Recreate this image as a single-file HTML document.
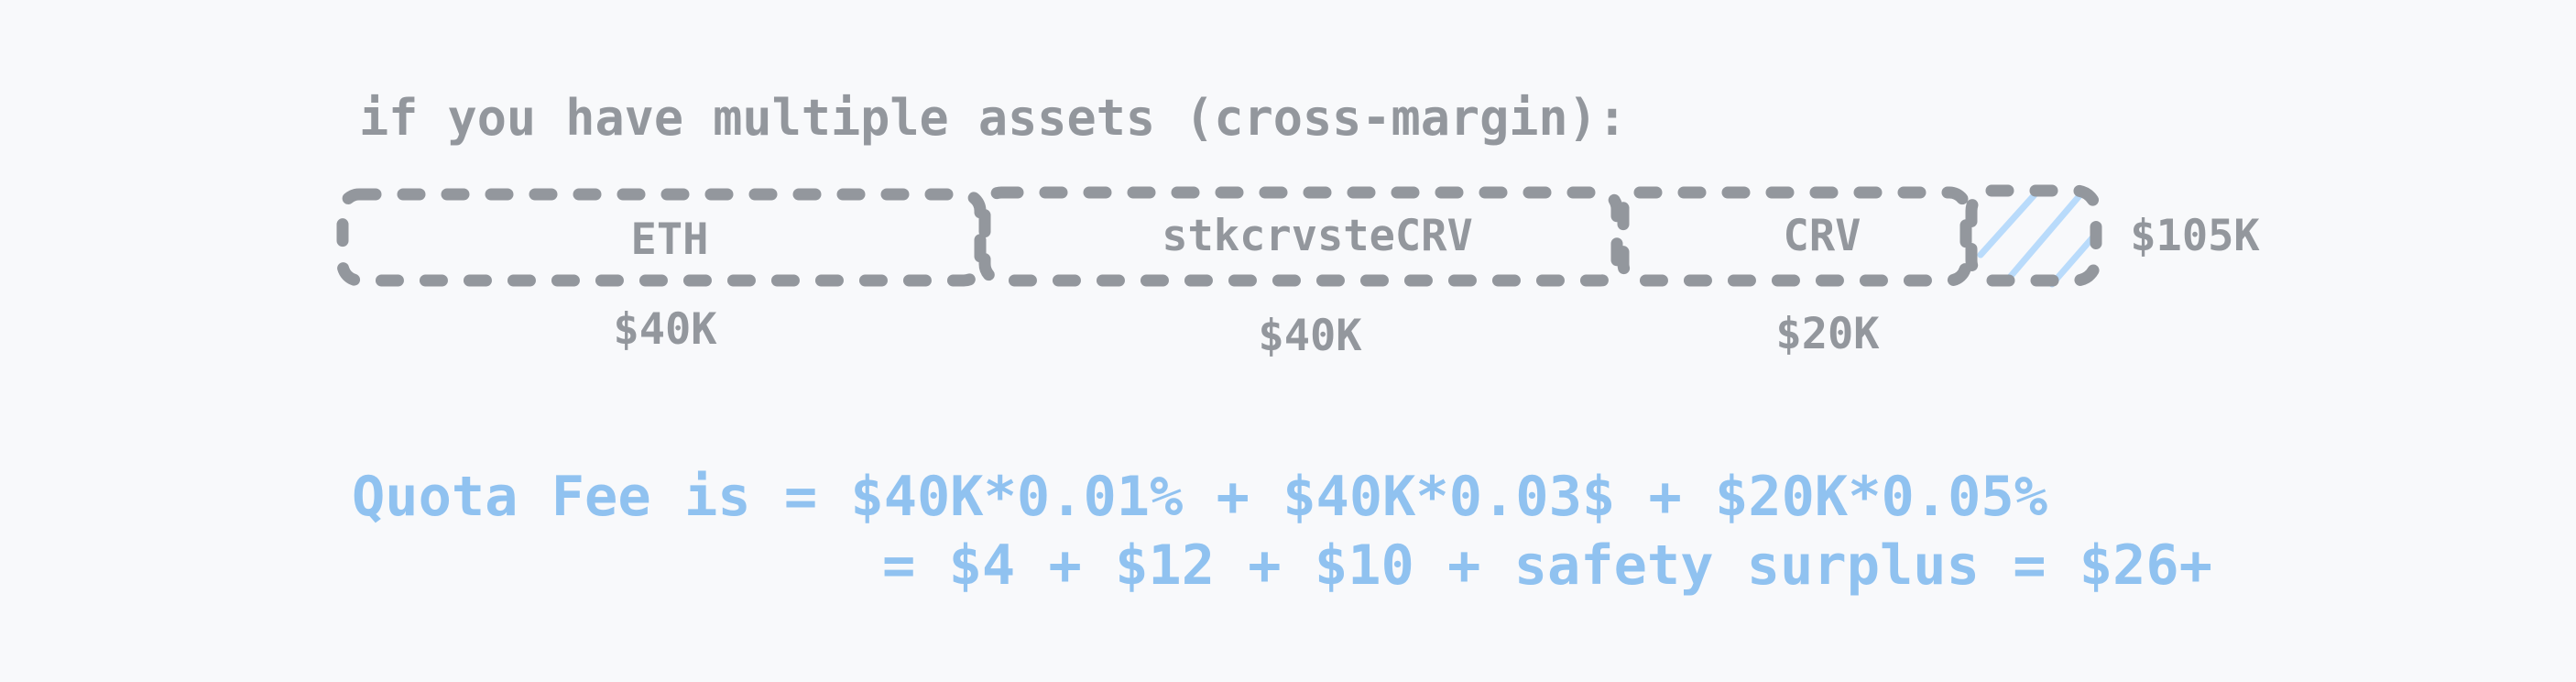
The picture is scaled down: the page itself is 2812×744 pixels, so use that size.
<!DOCTYPE html>
<html><head><meta charset="utf-8"><style>
html,body{margin:0;padding:0;background:#f8f9fb;}
body{width:2812px;height:744px;overflow:hidden;position:relative;}
svg{position:absolute;left:0;top:0;}
text{font-family:"DejaVu Sans Mono","Liberation Mono",monospace;font-weight:bold;}
</style></head><body>
<svg width="2812" height="744" viewBox="0 0 2812 744">
<g fill="none" stroke="#b9dbfb" stroke-width="7" stroke-linecap="round">
<line x1="2162" y1="278" x2="2225" y2="208"/>
<line x1="2190" y1="307" x2="2273" y2="210"/>
<line x1="2240" y1="310" x2="2288" y2="255"/>
</g>
<g fill="none" stroke="#93979d" stroke-width="13" stroke-linecap="round" stroke-dasharray="18 30">
<rect x="374" y="212" width="696" height="94" rx="18"/>
<rect x="1075" y="210" width="690" height="96" rx="18"/>
<rect x="1772" y="210" width="374" height="96" rx="18"/>
<rect x="2152" y="208" width="136" height="98" rx="22"/>
</g>
<g fill="#93979d" font-size="54">
<text x="392" y="147" textLength="1384" lengthAdjust="spacingAndGlyphs">if you have multiple assets (cross-margin):</text>
</g>
<g fill="#93979d" font-size="47" text-anchor="middle">
<text x="731" y="277">ETH</text>
<text x="1438" y="273">stkcrvsteCRV</text>
<text x="1989" y="273">CRV</text>
<text x="726" y="375">$40K</text>
<text x="1430" y="382">$40K</text>
<text x="1995" y="380">$20K</text>
<text x="2396" y="273">$105K</text>
</g>
<g fill="#90c2f0" font-size="60">
<text x="384" y="562" textLength="1851" lengthAdjust="spacingAndGlyphs">Quota Fee is = $40K*0.01% + $40K*0.03$ + $20K*0.05%</text>
<text x="963" y="637" textLength="1452" lengthAdjust="spacingAndGlyphs">= $4 + $12 + $10 + safety surplus = $26+</text>
</g>
</svg>
</body></html>
